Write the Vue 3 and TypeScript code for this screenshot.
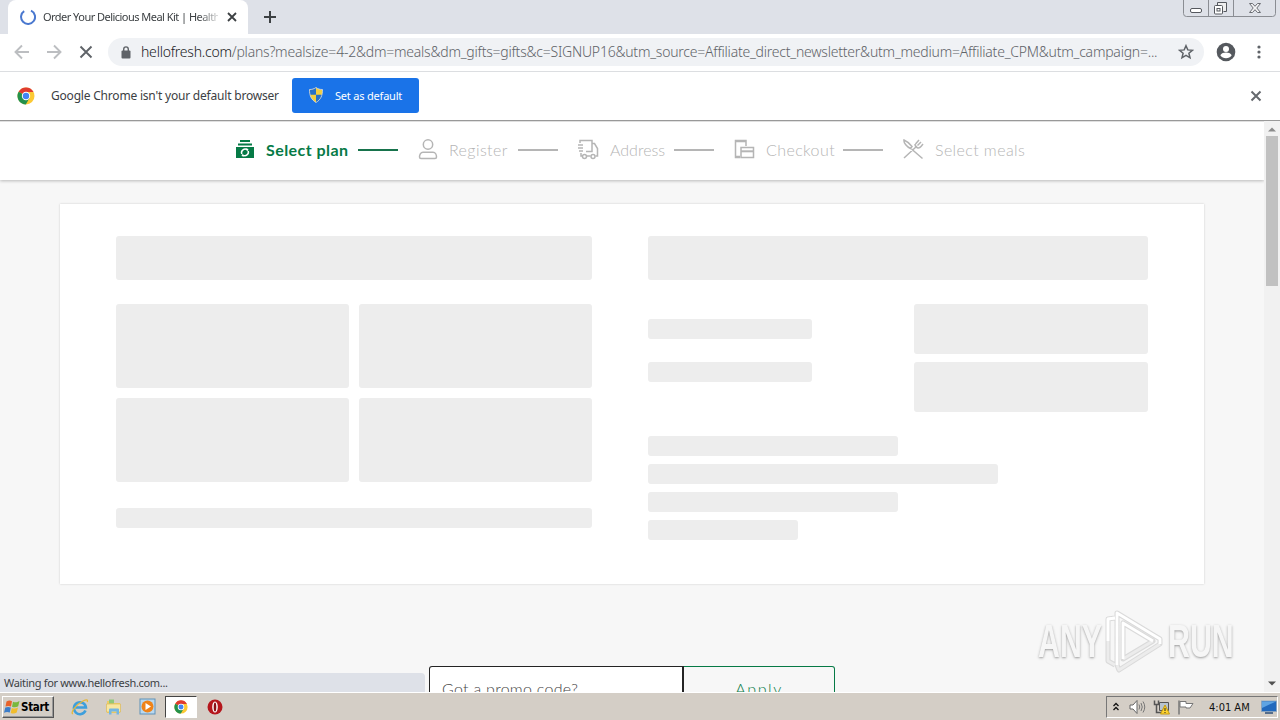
<script setup lang="ts">
interface Step {
  id: string
  label: string
  width: number
}

const steps: Step[] = [
  { id: 'plan', label: 'Select plan', width: 82 },
  { id: 'register', label: 'Register', width: 59 },
  { id: 'address', label: 'Address', width: 55 },
  { id: 'checkout', label: 'Checkout', width: 68 },
  { id: 'meals', label: 'Select meals', width: 90 },
]

const summaryLines: number[] = [250, 350, 250, 150]
</script>

<template>
  <div class="desktop">
    <header class="tabstrip">
      <div class="tab">
        <svg class="spinner" width="16" height="16" viewBox="0 0 16 16"><path d="M11 1.6A7 7 0 1 1 4.2 2.1" fill="none" stroke="#4a78cf" stroke-width="2" /></svg>
        <span class="tab-title">Order Your Delicious Meal Kit | Health</span>
        <svg class="tab-close" width="10" height="10" viewBox="0 0 10 10"><path d="M1 1l8 8M9 1l-8 8" stroke="#3c4043" stroke-width="1.8" /></svg>
      </div>
      <svg class="new-tab" width="12" height="12" viewBox="0 0 12 12"><path d="M6 0v12M0 6h12" stroke="#3c4043" stroke-width="2" /></svg>
      <svg class="window-controls" width="94" height="18" viewBox="0 0 94 18">
        <path d="M.5 0v13.5q0 3 3 3h86q3 0 3-3V0M25.5 0v16.500M50.500 0v16.500" fill="none" stroke="#8a8d93" />
        <rect x="7.500" y="8.500" width="11" height="4" rx="1.500" fill="#fff" stroke="#55585e" />
        <path d="M34.500 5v-2.500h9v9h-3" fill="#eee" stroke="#55585e" />
        <rect x="31.500" y="5.500" width="8" height="8.500" rx="1" fill="#fff" stroke="#55585e" />
        <rect x="34" y="8.500" width="3" height="2.500" fill="none" stroke="#55585e" />
        <path d="M66.500 3.500h3l2.500 2.800 2.500-2.800h3l-3.700 4.500 3.700 4.500h-3l-2.500-2.800-2.500 2.800h-3l3.700-4.500z" fill="#f4f4f6" stroke="#6b6e74" />
      </svg>
    </header>

    <div class="toolbar">
      <svg class="nav" width="100" height="20" viewBox="0 0 100 20" fill="none" stroke-width="1.9">
        <path d="M29 10H16M22 3.500L15.500 10l6.500 6.500M47 10h13M54 3.500l6.500 6.500-6.500 6.500" stroke="#bcbec1" />
        <path d="M80.500 4.500l11 11M91.500 4.500l-11 11" stroke="#5f6368" />
      </svg>
      <div class="omnibox">
        <svg class="lock" width="10" height="13" viewBox="0 0 10 13"><rect x=".5" y="4.500" width="9" height="8" rx="1" fill="#5f6368" /><path d="M2.700 5V3.200a2.300 2.300 0 0 1 4.600 0V5" fill="none" stroke="#5f6368" stroke-width="1.400" /></svg>
        <span class="url"><b>hellofresh.com</b>/plans?mealsize=4-2&amp;dm=meals&amp;dm_gifts=gifts&amp;c=SIGNUP16&amp;utm_source=Affiliate_direct_newsletter&amp;utm_medium=Affiliate_CPM&amp;utm_campaign=...</span>
        <svg class="star" width="16" height="16" viewBox="0 0 16 16"><path d="M8 1.700l1.800 4.200 4.600.4-3.500 3 1.100 4.500L8 11.400l-4 2.400 1.100-4.500-3.500-3 4.600-.4z" fill="none" stroke="#5f6368" stroke-width="1.500" /></svg>
      </div>
      <svg class="profile" width="20" height="20" viewBox="0 0 20 20"><circle cx="10" cy="10" r="9.300" fill="#55595e" /><circle cx="10" cy="7" r="3" fill="#fff" /><path d="M4.300 13.200c1-2 3.500-2.700 5.700-2.700s4.700.7 5.700 2.700a6.800 6.800 0 0 1-11.400 0z" fill="#fff" /></svg>
      <svg class="dots" width="4" height="14" viewBox="0 0 4 14" fill="#5f6368"><circle cx="2" cy="2" r="1.600" /><circle cx="2" cy="7" r="1.600" /><circle cx="2" cy="12" r="1.600" /></svg>
    </div>

    <div class="infobar">
      <svg class="chrome" width="18" height="18" viewBox="0 0 18 18">
        <circle cx="9" cy="9" r="8.500" fill="#fcc934" />
        <path d="M9 9L1.600 4.700A8.500 8.500 0 0 1 16.400 4.700L16.400 5H9z" fill="#df3b30" />
        <path d="M9 9L1.600 4.700A8.500 8.500 0 0 0 8.800 17.500L12.500 11z" fill="#23914b" />
        <circle cx="9" cy="9" r="4.200" fill="#fff" /><circle cx="9" cy="9" r="3.200" fill="#4285f4" />
      </svg>
      <span class="info-text">Google Chrome isn't your default browser</span>
      <button class="set-default">
        <svg width="14" height="16" viewBox="0 0 14 16"><path d="M7 .5c2 1.500 4 2 6.500 2 0 6-1.500 10-6.500 13C2 12.500.5 8.500.5 2.500 3 2.500 5 2 7 .5z" fill="#f4cf3f" /><path d="M7 .5v7.300H.9C.6 6.200.5 4.500.5 2.500 3 2.500 5 2 7 .5zM7 7.800h6.100c-.7 3.600-2.600 6-6.100 7.700z" fill="#2871c8" /><path d="M7 .5c2 1.500 4 2 6.500 2 0 6-1.500 10-6.500 13C2 12.500.5 8.500.5 2.500 3 2.500 5 2 7 .5z" fill="none" stroke="#d5dbe4" stroke-width=".8" /></svg>
        <span>Set as default</span>
      </button>
      <svg class="info-close" width="12" height="12" viewBox="0 0 12 12"><path d="M1.500 1.500l9 9M10.500 1.500l-9 9" stroke="#65696e" stroke-width="2" /></svg>
    </div>

    <div class="viewport">
      <main class="page">
        <nav class="steps">
          <div v-for="(step, i) in steps" :key="step.id" class="step" :class="[step.id, { active: i === 0 }]">
            <svg class="step-icon" width="22" height="22" viewBox="0 0 22 22" fill="none" stroke="currentColor" stroke-width="1.500">
              <template v-if="step.id === 'plan'">
                <path d="M5 2h10M3 5.500h14" stroke-width="2" />
                <path d="M1 8h18v11H1z" fill="currentColor" stroke="none" />
                <path d="M6.800 15a3.500 3.500 0 0 1 5.500-4M13.200 12a3.500 3.500 0 0 1-5.300 4" stroke="#fff" stroke-width="1.500" />
                <path d="M11 9.300l2.500.8-1.200 2.300zM9 17.700l-2.500-.6 1-2.400z" fill="#fff" stroke="none" />
              </template>
              <template v-else-if="step.id === 'register'">
                <circle cx="10" cy="5.500" r="4.700" />
                <path d="M5 13.200h10c2.500 0 3.500 3 3.500 4.800 0 1-.5 1.500-1.500 1.500H3c-1 0-1.500-.5-1.500-1.500 0-1.800 1-4.800 3.500-4.800z" />
              </template>
              <template v-else-if="step.id === 'address'">
                <path d="M2 4V1.500h12v11H8M14 4.500h2.500l3 5V17h-2M5 17H3v-3M12.500 17H9M0 6h5M0 9h5M1 12h4" />
                <circle cx="6.500" cy="17.500" r="2" /><circle cx="15" cy="17.500" r="2" />
              </template>
              <template v-else-if="step.id === 'checkout'">
                <path d="M12 7V1.500H1.500v17H6M1.500 2.500H12M1.500 17.500H6" />
                <path d="M7 8.500h12.500v10H7z" /><path d="M7 12.300h12.500" stroke-width="2" />
              </template>
              <template v-else>
                <path d="M1 19L14 7M8.500 10l11 9.500M1 1c-.5 3 3 7 6.500 8.500l1.500-2C6.500 4.500 3.500 2 1 1zM12 5c0 4 4 5 6 2.500L20 5M12.500 5L16 1M14.500 6.500L18 3" />
              </template>
            </svg>
            <span class="step-label" :style="{ width: step.width + 'px' }">{{ step.label }}</span>
            <i v-if="i < steps.length - 1" class="step-line"></i>
          </div>
        </nav>

        <section class="card">
          <div class="col-left">
            <div class="bone heading"></div>
            <div class="tiles"><div v-for="n in 4" :key="n" class="bone"></div></div>
            <div class="bone footer-line"></div>
          </div>
          <div class="col-right">
            <div class="bone heading"></div>
            <div class="options">
              <div class="option-labels"><div class="bone"></div><div class="bone"></div></div>
              <div class="option-buttons"><div class="bone"></div><div class="bone"></div></div>
            </div>
            <div class="summary"><div v-for="(w, i) in summaryLines" :key="i" class="bone" :style="{ width: w + 'px' }"></div></div>
          </div>
        </section>

        <form class="promo">
          <div class="promo-input">Got a promo code?</div>
          <div class="promo-apply">Apply</div>
        </form>
      </main>

      <aside class="scrollbar">
        <svg width="8" height="5" viewBox="0 0 8 5"><path d="M0 4.500L4 .5l4 4z" fill="#8b8b8b" /></svg>
        <div class="thumb"></div>
        <svg class="down" width="8" height="5" viewBox="0 0 8 5"><path d="M0 .5h8l-4 4z" fill="#505050" /></svg>
      </aside>

      <div class="status">Waiting for www.hellofresh.com...</div>

      <div class="watermark">
        <span class="any">ANY</span>
        <svg width="60" height="64" viewBox="0 0 60 64" fill="none" stroke-linejoin="round">
          <path d="M11 9L4 10v42l7 4M13 4l43 26v5L15 61l-2-5zM19 14v36l30-18z" stroke="#dadada" stroke-width="5" />
          <path d="M11 56l-7-4V10l7-1M56 35L15 61l-2-5M49 32L19 50" stroke="#ececec" stroke-width="2.800" />
          <path d="M13 56V4l43 26v5M19 50V14l30 18M4 32V10l7-1" stroke="#fff" stroke-width="2.800" />
        </svg>
        <span class="run">RUN</span>
      </div>
    </div>

    <footer class="taskbar">
      <div class="start">
        <svg width="16" height="16" viewBox="0 0 16 16"><path d="M2.500 2.500C5 1 6.500 1.500 8 2.300L7 7.500C5 6.700 3.500 6.800 1.500 7.500z" fill="#e8632b" /><path d="M9 2.700c2 .9 4 .8 6.500-.7l-1.300 5.300C12 8.700 10 8.500 8 7.800z" fill="#79b83d" /><path d="M1.300 8.600c2-.8 3.700-.9 5.500 0l-1 5C4 12.800 2 12.800 0 13.800z" fill="#3c7dc9" /><path d="M7.800 8.900c2 .8 4 .9 6.200-.4l-1.300 5c-2.200 1.400-4 1.200-6 .4z" fill="#f1bd2d" /></svg>
        <span>Start</span>
      </div>
      <div class="launchers">
        <svg width="18" height="18" viewBox="0 0 18 18"><path d="M14.500 12.500A6 6 0 1 1 14.900 9.500H4.500" fill="none" stroke="#3e9fdc" stroke-width="2.600" /><path d="M2 15.500C-1 16 4 7 12 3c4-2 5-1.300 4.200 1" fill="none" stroke="#e7b83a" stroke-width="1.300" /></svg>
        <svg width="18" height="18" viewBox="0 0 18 18"><path d="M2 3h5l1 2h7v10H2z" fill="#edcd65" /><path d="M4 1.500h5v4H4z" fill="#90c879" /><path d="M1.500 6h14v8h-14z" fill="#f7e6a0" stroke="#dcb95a" stroke-width=".7" /><path d="M4 16.500v-5q0-1 1-1h8q1 0 1 1v5h-2.500v-3h-5v3z" fill="#74b6e2" /></svg>
        <svg width="18" height="18" viewBox="0 0 18 18"><rect x="1" y="1" width="15" height="15" fill="#b9d8ef" stroke="#5f91b8" /><circle cx="8.500" cy="8.500" r="6" fill="#ef8318" /><path d="M6.500 5l5.500 3.500L6.500 12z" fill="#fff" /></svg>
      </div>
      <div class="task-active">
        <svg width="14" height="14" viewBox="0 0 18 18">
          <circle cx="9" cy="9" r="8.500" fill="#fcc934" />
          <path d="M9 9L1.600 4.700A8.500 8.500 0 0 1 16.400 4.700L16.400 5H9z" fill="#df3b30" />
          <path d="M9 9L1.600 4.700A8.500 8.500 0 0 0 8.800 17.500L12.500 11z" fill="#23914b" />
          <circle cx="9" cy="9" r="4.200" fill="#fff" /><circle cx="9" cy="9" r="3.200" fill="#4285f4" />
        </svg>
      </div>
      <svg class="opera" width="16" height="16" viewBox="0 0 16 16"><circle cx="8" cy="8" r="7.500" fill="#b5161c" /><ellipse cx="8" cy="8" rx="2.800" ry="5.500" fill="#fff" /><ellipse cx="8" cy="8" rx="1.300" ry="4.600" fill="#8b1015" /></svg>
      <div class="tray">
        <svg class="tray-icons" width="84" height="18" viewBox="0 0 84 18" fill="none">
          <path d="M2.500 8L5 5.500 7.500 8M2.500 12L5 9.500 7.500 12" stroke="#111" stroke-width="1.300" />
          <path d="M19 7h3l4-4.500v13L22 11h-3z" fill="#fff" stroke="#666" /><path d="M28 6.500q1.500 2.500 0 5M30 5q2.500 4 0 8M32 3.500q3.500 5.500 0 11" stroke="#777" />
          <path d="M48.500 4.500h9v8h-9z" fill="#b8c4cf" stroke="#555" /><path d="M43.500 2.500v4h4v-4M45.500 6.500v8h5" stroke="#555" stroke-width="1.500" /><path d="M54 7l4.500 9h-9z" fill="#ffd42d" stroke="#c49a10" /><path d="M54 10v3M54 14v1" stroke="#222" />
          <path d="M68 2.500v14" stroke="#777" stroke-width="1.500" /><path d="M69 3.500h6v2h7l-3 4.500h-4V9h-6z" fill="#fff" stroke="#777" />
        </svg>
        <span class="clock">4:01 AM</span>
        <svg width="16" height="14" viewBox="0 0 16 14"><rect x=".5" y="1" width="15" height="10.500" fill="#2269bd" stroke="#8da6be" stroke-width=".8" /><path d="M1 1.500h14L1 8z" fill="#5fa4e3" /><path d="M4 13h8" stroke="#2d4e78" stroke-width="1.500" /></svg>
      </div>
    </footer>
  </div>
</template>

<style>
body { margin: 0; overflow: hidden; }
</style>

<style scoped>
* { box-sizing: border-box; }
svg { display: block; flex: none; }
.desktop { width: 1280px; height: 720px; display: flex; flex-direction: column; overflow: hidden; background: #f7f7f7; font-family: "Noto Sans", "Open Sans", sans-serif; white-space: nowrap; }
.tabstrip { height: 34px; flex: none; display: flex; background: #dee1e8; padding-left: 8px; }
.tab { width: 240px; height: 34px; display: flex; align-items: center; background: #fff; border-radius: 8px 8px 0 0; padding-left: 12px; }
.tab-title { width: 175px; margin: -1px 0 0 7px; overflow: hidden; font-size: 11px; letter-spacing: -.53px; color: #3c4043; -webkit-mask-image: linear-gradient(90deg, #000 155px, transparent 180px); mask-image: linear-gradient(90deg, #000 155px, transparent 180px); }
.tab-close { margin-left: 9px; }
.new-tab { margin: 11px 0 0 16px; }
.window-controls { margin-left: auto; margin-right: 3px; }
.toolbar { height: 38px; flex: none; display: flex; align-items: center; background: #fff; border-bottom: 1px solid #dcdee1; padding-bottom: 1px; }
.nav { width: 100px; }
.omnibox { width: 1096px; height: 28px; margin-left: 8px; border-radius: 14px; background: #f0f2f5; display: flex; align-items: center; padding-left: 13px; }
.url { width: 1018px; margin: -2px 0 0 10px; font-size: 14px; font-weight: 300; letter-spacing: -.223px; color: #5f6368; }
.url b { font-weight: 300; color: #202124; }
.star { margin-left: 19px; }
.profile { margin-left: 12px; }
.dots { margin-left: 21px; }
.infobar { height: 49px; flex: none; display: flex; align-items: center; background: #fff; padding: 0 0 2px 17px; }
.info-text { width: 229px; margin-left: 16px; font-size: 12px; letter-spacing: -.2px; color: #3c4043; }
.set-default { width: 127px; height: 35px; margin: 0 0 0 12px; padding: 0 0 1px 17px; border: 0; border-radius: 3px; display: flex; align-items: center; gap: 12px; background: #1a73e8; color: #fff; font: 11px "Noto Sans", sans-serif; letter-spacing: -.2px; }
.info-close { margin-left: auto; margin-right: 18px; }
.viewport { position: relative; height: 572px; flex: none; display: flex; overflow: hidden; border-top: 1px solid #999; margin-top: -1px; background: #f7f7f7; }
.page { width: 1264px; height: 100%; overflow: hidden; }
.steps { height: 59px; display: flex; align-items: center; padding: 0 0 2px 235px; background: #fff; border-top: 1px solid #e0e0e0; box-shadow: 0 1px 3px rgba(0, 0, 0, .25); }
.step { display: flex; align-items: center; color: #b5b5b5; }
.step-icon { width: 22px; }
.step-label { margin: -2px 0 0 9px; font-family: Lato, sans-serif; font-size: 16px; font-weight: 300; letter-spacing: .4px; }
.address .step-label, .checkout .step-label, .meals .step-label { padding-left: 1px; }
.address .step-label { letter-spacing: 0; }
.step-line { width: 40px; height: 2px; margin: 0 20px 0 10px; background: #b5b5b5; }
.step.active { color: #067a46; }
.active .step-label { font-weight: 700; letter-spacing: .45px; }
.active .step-line { background: #17734c; }
.card { width: 1144px; height: 380px; margin: 24px 0 0 60px; padding: 32px 56px; display: flex; gap: 56px; background: #fff; box-shadow: 0 0 2px rgba(0, 0, 0, .18); }
.bone { border-radius: 3px; background: #ededed; }
.col-left { width: 476px; }
.col-right { width: 500px; }
.heading { height: 44px; }
.tiles { display: grid; grid-template-columns: 233px 233px; grid-auto-rows: 84px; gap: 10px; margin-top: 24px; }
.footer-line { height: 20px; margin-top: 26px; }
.options { display: flex; justify-content: space-between; margin-top: 24px; }
.option-labels { width: 164px; padding-top: 15px; display: flex; flex-direction: column; gap: 23px; }
.option-labels .bone { height: 20px; }
.option-buttons { width: 234px; display: flex; flex-direction: column; gap: 8px; }
.option-buttons .bone { height: 50px; }
.summary { display: flex; flex-direction: column; gap: 8px; margin-top: 24px; }
.summary .bone { height: 20px; }
.promo { display: flex; margin: 82px 0 0 429px; height: 50px; font-family: Lato, sans-serif; font-size: 16px; font-weight: 300; line-height: 44px; }
.promo-input { width: 255px; padding-left: 12px; border: 1px solid #242424; border-right-width: 2px; border-radius: 3px 0 0 3px; background: #fff; color: #444; letter-spacing: .28px; }
.promo-apply { width: 151px; border: 1px solid #067a46; border-left: 0; border-radius: 0 3px 3px 0; text-align: center; color: #067a46; letter-spacing: 1.6px; }
.scrollbar { width: 16px; display: flex; flex-direction: column; align-items: center; padding-top: 6px; background: #f1f1f1; }
.thumb { width: 12px; height: 150px; margin-top: 4px; background: #c1c1c1; }
.down { margin-top: auto; margin-bottom: 6px; }
.status { position: absolute; left: 0; bottom: 0; width: 425px; height: 19px; padding-left: 4px; border-radius: 0 4px 0 0; background: #dee1e8; font-size: 11px; letter-spacing: -.32px; line-height: 19px; color: #3c4043; }
.watermark { position: absolute; left: 1038px; top: 488px; display: flex; align-items: center; color: #f6f6f6; font: 700 46px/60px "Liberation Sans", sans-serif; text-shadow: 0 1px 3px #999; }
.watermark span { display: block; transform-origin: left center; transform: scaleX(.66); }
.any { width: 66px; }
.run { width: 64px; margin-left: 4px; }
.taskbar { height: 28px; flex: none; display: flex; align-items: center; background: #d4cec6; box-shadow: inset 0 1px #fff; padding: 2px 2px 0; font: 11px "DejaVu Sans Condensed", sans-serif; }
.start { width: 52px; height: 22px; display: flex; align-items: center; gap: 1px; padding-left: 1px; border: 1px solid; border-color: #fff #555 #555 #fff; box-shadow: inset -1px -1px #999; font-weight: 700; font-size: 11.500px; letter-spacing: -.3px; color: #000; }
.launchers { display: flex; gap: 16px; margin-left: 17px; }
.task-active { width: 32px; height: 22px; margin-left: 8px; display: flex; align-items: center; justify-content: center; background: #fff; border: 1px solid; border-color: #444 #fff #fff #444; }
.opera { margin-left: 10px; }
.tray { width: 172px; height: 22px; margin-left: auto; display: flex; align-items: center; padding-left: 4px; border: 1px solid; border-color: #777 #fff #fff #777; color: #111; }
.clock { width: 43px; margin: 0 9px 0 14px; }
</style>
